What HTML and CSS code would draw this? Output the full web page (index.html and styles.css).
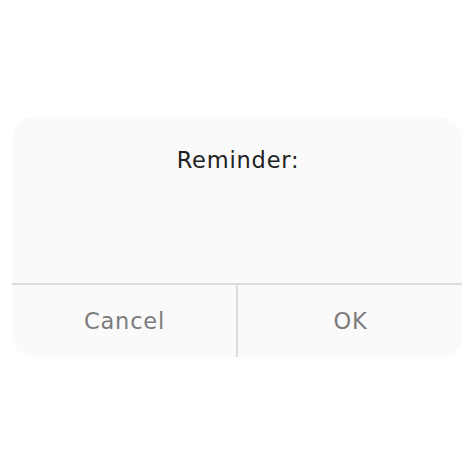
FILE: index.html
```html
<!DOCTYPE html>
<html>
<head>
<meta charset="utf-8">
<link rel="stylesheet" href="styles.css">
</head>
<body>
<div class="page">
  <div class="dialog">
    <div class="body">
      <div class="title">Reminder:</div>
    </div>
    <div class="actions">
      <div class="btn">Cancel</div>
      <div class="sep"></div>
      <div class="btn">OK</div>
    </div>
  </div>
</div>
</body>
</html>
```
FILE: styles.css
```css
html, body {
  margin: 0;
  padding: 0;
  background: #ffffff;
}
.page {
  width: 474px;
  height: 474px;
  padding: 117px 12px 0 12px;
  box-sizing: border-box;
  font-family: "DejaVu Sans", "Inter", sans-serif;
}
.dialog {
  width: 450px;
  height: 240px;
  background: #fafafa;
  border-radius: 22px;
  display: flex;
  flex-direction: column;
  overflow: hidden;
}
.body {
  border-bottom: 2px solid #dcdcdc;
  display: flex;
  justify-content: center;
  padding-top: 30px;
  height: 136px;
}
.title {
  font-size: 22.5px;
  line-height: 26px;
  color: #222222;
  letter-spacing: 0.8px;
  padding-left: 2px;
}
.actions {
  flex: 1;
  display: flex;
}
.btn {
  flex: 1;
  display: flex;
  align-items: center;
  justify-content: center;
  font-size: 22.5px;
  color: #7c7c7c;
  letter-spacing: 0.8px;
  padding-left: 1px;
}
.sep {
  width: 2px;
  background: #dcdcdc;
}
.btn:first-child {
  flex: 0 0 223px;
}
```
